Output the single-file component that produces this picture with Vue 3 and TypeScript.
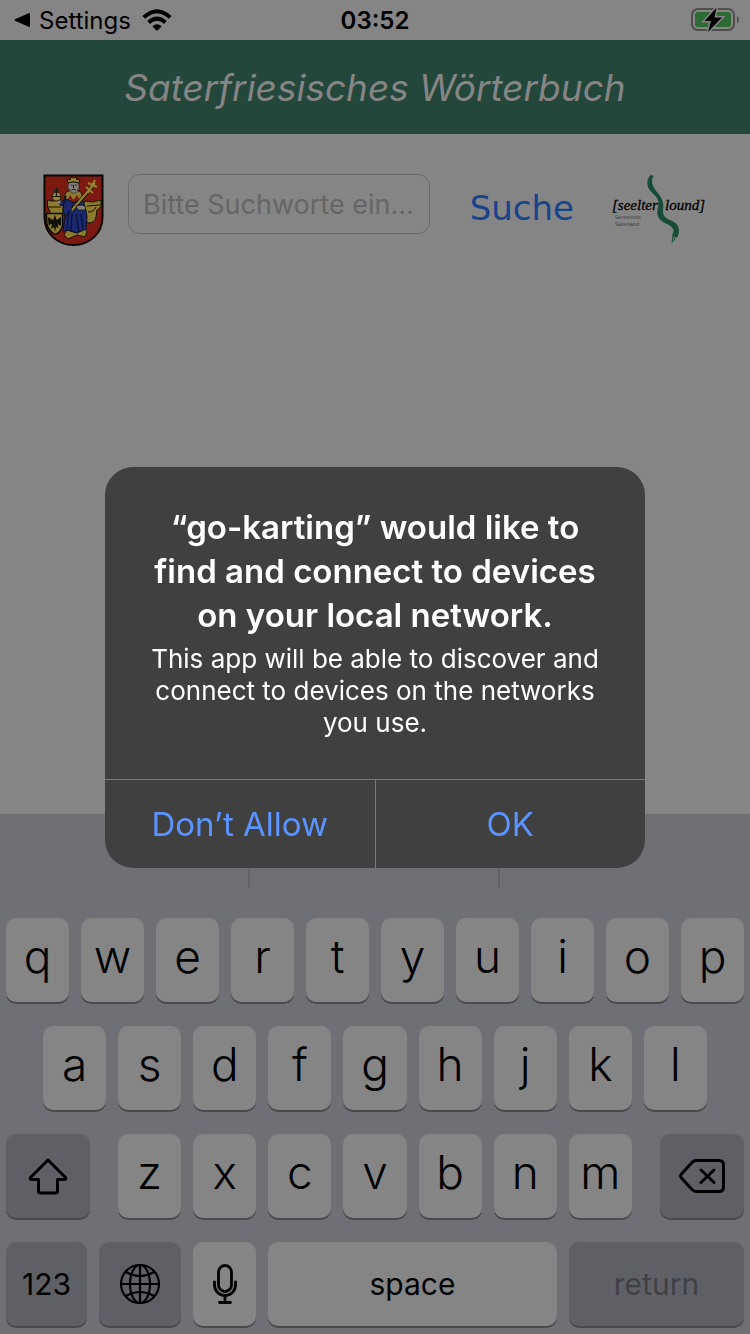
<script setup lang="ts">
import { ref } from 'vue'

const query = ref('')
const topRow: string[] = 'qwertyuiop'.split('')
const homeRow: string[] = 'asdfghjkl'.split('')
const lowerRow: string[] = 'zxcvbnm'.split('')

function type(letter: string): void {
  query.value += letter
}
function erase(): void {
  query.value = query.value.slice(0, -1)
}
</script>

<template>
  <div class="screen">
    <div class="status">
      <a class="back" href="#">
        <svg width="16" height="16" viewBox="0 0 16 16" aria-hidden="true">
          <path d="M14.500 1.200Q16 .5 16 2V14Q16 15.500 14.500 14.800L1 8.800Q0 8 1 7.200Z" />
        </svg>
        <span>Settings</span>
      </a>
      <svg class="wifi" width="30" height="22" viewBox="0 0 30 22" aria-hidden="true">
        <g fill="none" stroke="#000" stroke-width="4">
          <path d="M1.800 8.400Q15 -3.800 28.200 8.400" />
          <path d="M6.600 13.400Q15 6 23.400 13.400" />
        </g>
        <path d="M10.300 17.300Q15 13.200 19.700 17.300L15 22Z" />
      </svg>
      <time class="clock">03:52</time>
      <svg class="battery" width="50" height="26" viewBox="0 0 50 26" aria-hidden="true">
        <rect x="2" y="2" width="42" height="21" rx="6" fill="none" stroke="#4e4e4e" stroke-width="2" />
        <rect x="5" y="5" width="36" height="15" rx="3" fill="#2c6b33" />
        <path d="M47 9Q49 10 49 12.500T47 16Z" fill="#4e4e4e" />
        <path d="M26.500 .8L14.500 14H21L18 25L32 10.500H24.500Z" stroke="#858585" stroke-width="3" />
        <path d="M26.500 .8L14.500 14H21L18 25L32 10.500H24.500Z" />
      </svg>
    </div>

    <header class="title">
      <h1>Saterfriesisches Wörterbuch</h1>
    </header>

    <main class="content">
      <form class="search" @submit.prevent>
        <svg class="crest" width="61" height="73" viewBox="0 0 61 73" role="img" aria-label="Wappen">
          <path d="M1.500 1.500H59.500V43C59.500 60 46 71 30.500 71S1.500 60 1.500 43Z" fill="#7c1a12" stroke="#0a0605" stroke-width="2" />
          <g stroke="#151305" stroke-width="1" fill="#8c7b2c">
            <path d="M4.500 26L9 27L20 26V38L19 42H6L7 37L4.500 33ZM41 27L50 28L58 26V33L54 36L53 43Q52 49 45 49L41 44Z" />
            <path d="M4.500 33H18M44 32L57 31M45 38Q51 38 53 33" fill="none" />
            <path d="M23 18Q31 14 38 18L40 24L36 27H25L21 24Z" />
            <path d="M24 56L34 59L42 54L44 58L42 63L34 61L25 65L21 61Z" />
          </g>
          <path d="M23 22L20 28L15 27L17 31L22 32Z" fill="#1b286d" stroke="#0c1020" />
          <path d="M24 25L31 29L37 25L41 29V33L43 36L44 43L43 55L34 59L24 56L20 58L22 42L20 36L21 29Z" fill="#1b286d" stroke="#0c1020" />
          <path d="M26 38L24 55M29 40L28 57M33 40L36 58M38 40L40 55M22 44L27 36M29 31L31 36" fill="none" stroke="#0a1030" stroke-width="1.200" />
          <path d="M29 36L49 13" stroke="#1c1805" stroke-width="4" />
          <path d="M29 36L52 9M43 13L50 19M45 9L54 13M45 19L52 6" fill="none" stroke="#94822f" stroke-width="2" />
          <path d="M33 32L39 31L43 33L42 36L35 36Z" fill="#86807c" stroke="#171310" stroke-width=".8" />
          <path d="M12 25L18 27L17 30L12 28Z" fill="#86807c" />
          <path d="M25.500 8H35.500L36 14L33 19H29L25 14Z" fill="#837e7a" stroke="#302b29" stroke-width=".7" />
          <path d="M28 11H29.500M32 11H33.500M30.500 11V14M28.500 16Q30.500 14.500 33 16" fill="none" stroke="#151312" />
          <path d="M25 9L24 5L27 6L28 3L30.500 4L33 3L34 6L37 5L36 9Q30.500 6.500 25 9Z" fill="#94822f" stroke="#151305" />
          <path d="M27 21L30.500 26L34 21L36 25L31 28L25 25Z" fill="#7c1a12" />
          <circle cx="13.500" cy="22.500" r="4.500" fill="#95832e" stroke="#1c1805" />
          <path d="M9 22.500H18M13.500 22V14M11 16.500H16" fill="none" stroke="#1c1805" stroke-width="1.200" />
          <path d="M3.500 39.500H19.500V52Q18 58 12 60.500Q6 57 4 50Z" fill="#8c7b2c" stroke="#090804" stroke-width="1.300" />
          <path d="M12 41L13.500 46L18 43L18 52L14.500 50L15.500 54L13 53L12 58L11 53L8 55L9 50L5.500 51L5 43L10 46Z" fill="#100f09" />
        </svg>
        <input v-model="query" class="field" type="text" placeholder="Bitte Suchworte eingeben" aria-label="Bitte Suchworte eingeben" />
        <button class="submit" type="submit">Suche</button>
        <svg class="brand" width="98" height="70" viewBox="0 0 98 70" role="img" aria-label="Gemeinde Saterland">
          <path d="M40 1C35.500 4 35.500 11 38 15C41 20 47 22 47.500 29C47.500 33 45.500 37 46.500 41C48 47 54 49 58 51C61 53 63 55 63 58L61 64L64 62L66 64C68.500 60 69 53 65 49.500C61 46 56 46 53 41.500C51 38 53 34 52 29C51 22 45 18 42.500 13C40.500 9 40.500 5 42.500 2Z" fill="#174d37" />
          <path d="M63 57L61 69M66 56L63 67M61 60L64 62" fill="none" stroke="#174d37" stroke-width="1" />
          <text x="1" y="36" class="wordmark">[seelter</text>
          <text x="54" y="36" class="wordmark">lound]</text>
          <text x="4" y="45" class="subline">Gemeinde</text>
          <text x="4" y="52" class="subline">Saterland</text>
        </svg>
      </form>
    </main>

    <section class="keyboard" aria-label="Keyboard">
      <div class="suggestions"><span></span><span></span><span></span></div>
      <div class="row">
        <button v-for="k in topRow" :key="k" type="button" class="key" @click="type(k)">{{ k }}</button>
      </div>
      <div class="row home">
        <button v-for="k in homeRow" :key="k" type="button" class="key" @click="type(k)">{{ k }}</button>
      </div>
      <div class="row lower">
        <button type="button" class="key dark side" aria-label="Shift">
          <svg width="42" height="38" viewBox="0 0 42 38" aria-hidden="true">
            <path d="M21 3L38.500 20.500Q39.500 22.500 37 22.500H30.500V34Q30.500 36 28.500 36H13.500Q11.500 36 11.500 34V22.500H5Q2.500 22.500 3.500 20.500Z" fill="none" stroke="#000" stroke-width="3" stroke-linejoin="round" />
          </svg>
        </button>
        <div class="row letters">
          <button v-for="k in lowerRow" :key="k" type="button" class="key" @click="type(k)">{{ k }}</button>
        </div>
        <button type="button" class="key dark side" aria-label="Delete" @click="erase">
          <svg width="48" height="36" viewBox="0 0 48 36" aria-hidden="true">
            <g fill="none" stroke="#000" stroke-width="3" stroke-linejoin="round" stroke-linecap="round">
              <path d="M18 2.500H41Q45.500 2.500 45.500 7V29Q45.500 33.500 41 33.500H18Q16 33.500 14 31.500L3 19.500Q2 18 3 16.500L14 4.500Q16 2.500 18 2.500Z" />
              <path d="M23 12L36 24.500M36 12L23 24.500" />
            </g>
          </svg>
        </button>
      </div>
      <div class="row bottom">
        <button type="button" class="key dark numbers">123</button>
        <button type="button" class="key dark globe" aria-label="Next keyboard">
          <svg width="42" height="42" viewBox="0 0 42 42" aria-hidden="true">
            <g fill="none" stroke="#000" stroke-width="2.200">
              <circle cx="21" cy="21" r="19" />
              <ellipse cx="21" cy="21" rx="10" ry="19" />
              <path d="M21 2V40M2 21H40M7 9Q21 17 35 9M7 33Q21 25 35 33" />
            </g>
          </svg>
        </button>
        <button type="button" class="key mic" aria-label="Dictate">
          <svg width="26" height="42" viewBox="0 0 26 42" aria-hidden="true">
            <g fill="none" stroke="#000" stroke-width="2.800" stroke-linecap="round">
              <rect x="6.500" y="2.500" width="13" height="26" rx="6.500" />
              <path d="M2.500 19V22A10.500 10.500 0 0 0 23.500 22V19M13 33V39M7.500 39.500H18.500" />
            </g>
          </svg>
        </button>
        <button type="button" class="key space" @click="type(' ')">space</button>
        <button type="button" class="key dark return" disabled>return</button>
      </div>
    </section>

    <div class="overlay">
      <div class="alert" role="alertdialog" aria-labelledby="alert-title" aria-describedby="alert-text">
        <div class="message">
          <h2 id="alert-title">“go-karting” would like to<br />find and connect to devices<br />on your local network.</h2>
          <p id="alert-text">This app will be able to discover and<br />connect to devices on the networks<br />you use.</p>
        </div>
        <div class="actions">
          <button type="button">Don’t Allow</button>
          <button type="button">OK</button>
        </div>
      </div>
    </div>
  </div>
</template>

<style>
body {
  background: #858585;
}
</style>

<style scoped>
.screen {
  min-height: 100vh;
  display: flex;
  flex-direction: column;
  background: #858585;
  color: #000;
  font-family: Inter, "Liberation Sans", sans-serif;
}
.screen * {
  box-sizing: border-box;
}
svg {
  display: block;
  flex: none;
}
button,
input {
  font-family: inherit;
  margin: 0;
  padding: 0;
  border: 0;
}
.status {
  position: relative;
  display: flex;
  align-items: center;
  height: 40px;
  padding: 0 10px 0 14px;
}
.back {
  display: flex;
  align-items: center;
  gap: 9px;
  color: #000;
  font-size: 24px;
  text-decoration: none;
}
.wifi {
  margin-left: 11px;
}
.clock {
  position: absolute;
  left: 0;
  right: 0;
  text-align: center;
  font-size: 24px;
  font-weight: 600;
}
.battery {
  margin-left: auto;
}
.title {
  height: 94px;
  display: flex;
  align-items: center;
  justify-content: center;
  background: #24473b;
}
h1 {
  margin: 0;
  font-size: 37px;
  font-weight: 400;
  font-style: italic;
  color: #858585;
  white-space: nowrap;
}
.content {
  flex: 1;
  padding: 40px 41px 0 43px;
}
.search {
  display: flex;
  align-items: flex-start;
}
.field {
  flex: 1;
  min-width: 0;
  height: 60px;
  margin-left: 24px;
  padding: 0 12px 0 14px;
  border: 1px solid #6a6a6a;
  border-radius: 12px;
  background: transparent;
  font-size: 27px;
  text-overflow: ellipsis;
}
.field::placeholder {
  color: #666;
  opacity: 1;
}
.submit {
  margin: 0 37px 0 40px;
  height: 68px;
  background: none;
  color: #19438a;
  font-family: "DejaVu Sans", sans-serif;
  font-size: 34px;
}
.wordmark {
  font: italic 15px "Liberation Serif", serif;
  stroke: #000;
  stroke-width: 0.3px;
}
.subline {
  font: 5px "DejaVu Sans", sans-serif;
  fill: #333;
}
.keyboard {
  display: flex;
  flex-direction: column;
  gap: 24px;
  padding: 0 6px 8px;
  background: #6f7075;
}
.suggestions {
  display: grid;
  grid-template-columns: repeat(3, 1fr);
  height: 80px;
  margin: 0 -6px;
  padding-bottom: 6px;
}
.suggestions span:not(:last-child) {
  border-right: 2px solid #626367;
}
.row {
  display: flex;
  gap: 12px;
}
.home {
  padding: 0 37px;
}
.lower {
  gap: 28px;
}
.letters {
  flex: 1;
}
.key {
  flex: 1;
  min-width: 0;
  height: 84px;
  display: flex;
  align-items: center;
  justify-content: center;
  padding-bottom: 8px;
  border-radius: 10px;
  background: #858585;
  box-shadow: 0 2px 0 #494a4c;
  color: #000;
  font-size: 46px;
  font-weight: 350;
}
.key.dark {
  background: #5e6066;
}
.key.side {
  flex: 0 0 84px;
  padding: 0;
}
.bottom .key {
  padding: 0;
  font-size: 30px;
  font-weight: 400;
}
.bottom .numbers {
  flex-grow: 81;
}
.bottom .globe {
  flex-grow: 82;
}
.bottom .mic {
  flex-grow: 63;
}
.bottom .space {
  flex-grow: 289;
}
.bottom .return {
  flex-grow: 175;
  color: #404145;
}
.overlay {
  position: fixed;
  inset: 0;
  display: flex;
  align-items: center;
  justify-content: center;
}
.alert {
  width: 72%;
  border-radius: 28px;
  background: #404040;
  overflow: hidden;
  text-align: center;
}
.message {
  padding: 38px 20px 40px;
  color: #fff;
}
h2 {
  margin: 0;
  font-size: 33px;
  font-weight: 600;
  line-height: 44px;
}
p {
  margin: 6px 0 0;
  font-size: 26px;
  line-height: 32px;
}
.actions {
  display: flex;
  border-top: 1px solid #7a7a7a;
}
.actions button {
  flex: 1;
  height: 88px;
  background: none;
  color: #5b94ff;
  font-size: 33px;
}
.actions button + button {
  border-left: 1px solid #7a7a7a;
}
</style>
